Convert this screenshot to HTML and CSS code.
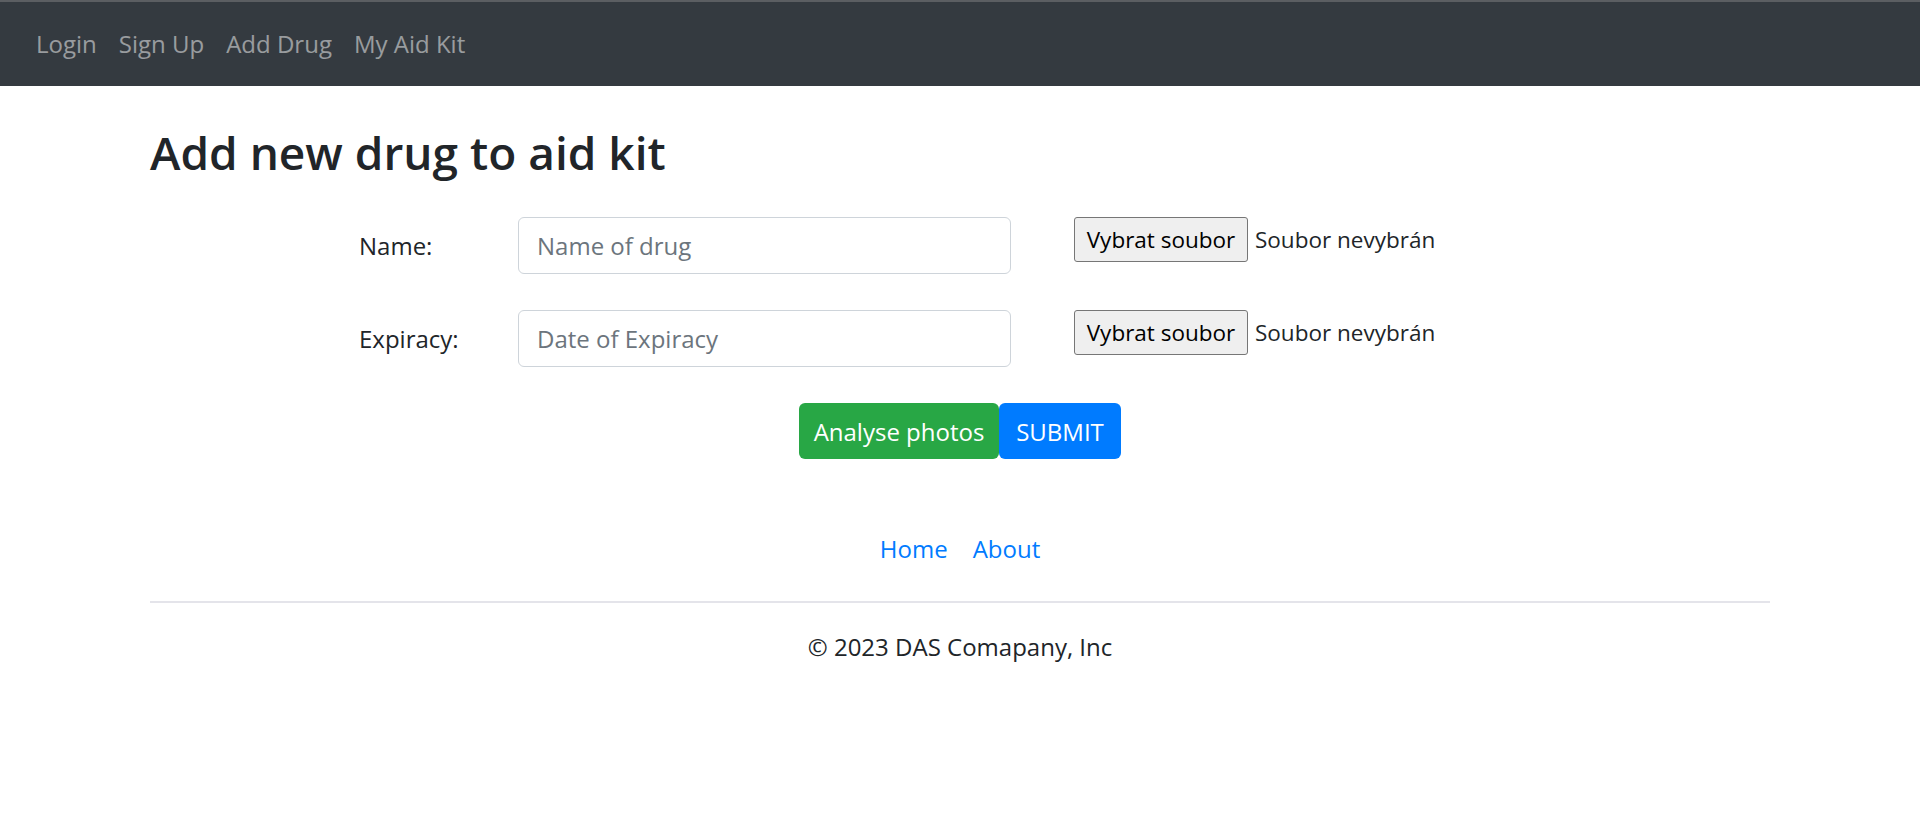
FILE: index.html
```html
<!DOCTYPE html>
<html lang="en">
<head>
<meta charset="utf-8">
<title>Add Drug</title>
<link rel="stylesheet" href="styles.css">
</head>
<body>
<nav class="navbar">
  <a class="nav-link" href="#">Login</a>
  <a class="nav-link" href="#">Sign Up</a>
  <a class="nav-link" href="#">Add Drug</a>
  <a class="nav-link" href="#">My Aid Kit</a>
</nav>
<main class="container">
  <h2 class="title">Add new drug to aid kit</h2>
  <form class="drug-form">
    <div class="form-row">
      <label class="form-label" for="name">Name:</label>
      <input class="form-control" id="name" type="text" placeholder="Name of drug">
      <div class="file-input">
        <span class="file-btn">Vybrat soubor</span>
        <span class="file-name">Soubor nevybrán</span>
      </div>
    </div>
    <div class="form-row">
      <label class="form-label" for="exp">Expiracy:</label>
      <input class="form-control" id="exp" type="text" placeholder="Date of Expiracy">
      <div class="file-input">
        <span class="file-btn">Vybrat soubor</span>
        <span class="file-name">Soubor nevybrán</span>
      </div>
    </div>
    <div class="actions">
      <button type="button" class="btn btn-success">Analyse photos</button>
      <button type="button" class="btn btn-primary">SUBMIT</button>
    </div>
  </form>
  <footer class="footer">
    <div class="footer-links">
      <a class="footer-link" href="#">Home</a>
      <a class="footer-link" href="#">About</a>
    </div>
    <hr class="divider">
    <p class="copyright">© 2023 DAS Comapany, Inc</p>
  </footer>
</main>
</body>
</html>
```
FILE: styles.css
```css
* { box-sizing: border-box; }
body {
  margin: 0;
  font-family: "Open Sans", "Noto Sans", sans-serif;
  font-size: 24px;
  color: #212529;
  background: #fff;
}
.navbar {
  border-top: 2px solid #5b5e62;
  background: #343a40;
  height: 86px;
  display: flex;
  align-items: center;
  padding-left: 25px;
}
.nav-link {
  color: rgba(255, 255, 255, 0.5);
  text-decoration: none;
  padding: 0 11px;
  line-height: 36px;
}
.container {
  margin: 0 150px;
}
.title {
  font-size: 46px;
  font-weight: 600;
  line-height: 1.2;
  margin: 0;
  padding-top: 39px;
  margin-bottom: 37px;
}
.drug-form {
  display: flex;
  flex-direction: column;
  gap: 36px;
}
.form-row {
  display: flex;
  align-items: flex-start;
  padding-left: 209px;
}
.form-label {
  width: 159px;
  line-height: 57px;
}
.form-control {
  width: 493px;
  height: 57px;
  padding: 9px 18px;
  font: inherit;
  color: #495057;
  border: 1px solid #ced4da;
  border-radius: 6px;
  outline: none;
}
.form-control::placeholder { color: #6c757d; }
.file-input {
  margin-left: 63px;
  display: flex;
  align-items: center;
  gap: 7px;
  font-size: 22.5px;
}
.file-btn {
  display: inline-flex;
  align-items: center;
  justify-content: center;
  width: 174px;
  height: 45px;
  background: #efefef;
  border: 1px solid #767676;
  border-radius: 3px;
  color: #000;
  white-space: nowrap;
}
.file-name { color: #212529; }
.actions {
  display: flex;
  justify-content: center;
}
.btn {
  font: inherit;
  color: #fff;
  height: 56px;
  padding: 0;
  border: 1px solid transparent;
  border-radius: 6px;
  cursor: pointer;
  white-space: nowrap;
}
.btn-success { background: #28a745; width: 200px; }
.btn-primary { background: #007bff; width: 122px; }
.footer {
  padding-top: 72px;
}
.footer-links {
  display: flex;
  justify-content: center;
  gap: 25px;
}
.footer-link {
  color: #007bff;
  text-decoration: none;
  line-height: 36px;
}
.divider {
  border: 0;
  border-top: 2px solid #e4e4ea;
  margin: 34px 0 0;
}
.copyright {
  text-align: center;
  margin: 26px 0 0;
  line-height: 36px;
}
```
